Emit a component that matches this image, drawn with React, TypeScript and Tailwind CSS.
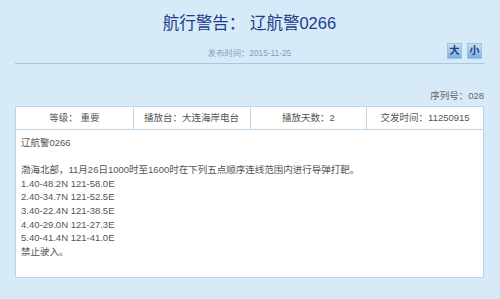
import React from 'react';

const cells = ['等级： 重要', '播放台：大连海岸电台', '播放天数：2', '交发时间：11250915'];

const lines = [
  '辽航警0266',
  '',
  '渤海北部，11月26日1000时至1600时在下列五点顺序连线范围内进行导弹打靶。',
  '1.40-48.2N 121-58.0E',
  '2.40-34.7N 121-52.5E',
  '3.40-22.4N 121-38.5E',
  '4.40-29.0N 121-27.3E',
  '5.40-41.4N 121-41.0E',
  '禁止驶入。',
];

const SizeButton = ({ label }: { label: string }) => (
  <button className="w-[15px] h-[16px] flex items-center justify-center text-[10px] font-bold leading-none text-[#1d3f7a] bg-gradient-to-b from-[#c4def5] to-[#7eaee0] border border-[#9cc2e6]">
    {label}
  </button>
);

const App = () => {
  return (
    <div
      className="w-full h-[299px] bg-[#d6eaf8] px-[15px] pr-[16px]"
      style={{ fontFamily: '"Liberation Sans", "Noto Sans CJK SC", sans-serif' }}
    >
      <div className="pt-[13px] pb-[4px] border-b border-[#a9c6e2]">
        <h1 className="text-center text-[16.5px] leading-[20px] text-[#1c3d8c]">航行警告： 辽航警0266</h1>
        <div className="mt-[10px] grid grid-cols-[1fr_auto_1fr] items-end">
          <div />
          <p className="text-[8.3px] leading-[12px] text-[#7c9fc6]">发布时间：2015-11-25</p>
          <div className="flex justify-end gap-[5px] pr-[2px]">
            <SizeButton label="大" />
            <SizeButton label="小" />
          </div>
        </div>
      </div>

      <p className="mt-[25px] text-right text-[9.5px] leading-[14px] text-[#666]">序列号：028</p>

      <div className="mt-[3px] bg-white border border-[#bcd5e8]">
        <div className="grid grid-cols-4 border-b border-[#bcd5e8]">
          {cells.map((cell, index) => (
            <div
              key={index}
              className={`h-[22px] flex items-center justify-center text-[9.5px] text-[#555] ${index > 0 ? 'border-l border-[#bcd5e8]' : ''}`}
            >
              {cell}
            </div>
          ))}
        </div>
        <div className="h-[147px] pl-[5px] pt-[6px] text-[9.5px] leading-[13.6px] text-[#555]">
          {lines.map((line, index) => (
            <div key={index} className="h-[13.6px] whitespace-nowrap">
              {line}
            </div>
          ))}
        </div>
      </div>
    </div>
  );
};

export default App;
